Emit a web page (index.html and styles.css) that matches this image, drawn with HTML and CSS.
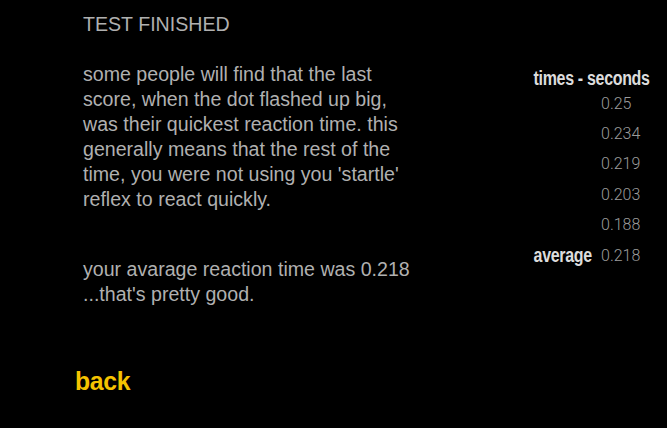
FILE: index.html
```html
<!DOCTYPE html>
<html>
<head>
<meta charset="utf-8">
<link rel="stylesheet" href="styles.css">
</head>
<body>
<div class="page">
  <div class="main">
    <div class="text">
      <h1 class="title">TEST FINISHED</h1>
      <p class="para">some people will find that the last<br>score, when the dot flashed up big,<br>was their quickest reaction time. this<br>generally means that the rest of the<br>time, you were not using you 'startle'<br>reflex to react quickly.</p>
      <p class="result">your avarage reaction time was 0.218<br>...that's pretty good.</p>
    </div>
    <div class="times">
      <div class="times-head"><span class="cond">times - seconds</span></div>
      <div class="row"><span class="label"></span><span class="val">0.25</span></div>
      <div class="row"><span class="label"></span><span class="val">0.234</span></div>
      <div class="row"><span class="label"></span><span class="val">0.219</span></div>
      <div class="row"><span class="label"></span><span class="val">0.203</span></div>
      <div class="row"><span class="label"></span><span class="val">0.188</span></div>
      <div class="row"><span class="label"><span class="cond cond-r">average</span></span><span class="val">0.218</span></div>
    </div>
  </div>
  <div class="back"><span class="back-text">back</span></div>
</div>
</body>
</html>
```

FILE: styles.css
```css
html, body {
  margin: 0;
  padding: 0;
  background: #000;
}
body {
  width: 667px;
  height: 428px;
  overflow: hidden;
  font-family: "Liberation Sans", Arial, sans-serif;
}
.page {
  display: flex;
  flex-direction: column;
  padding-top: 12px;
}
.main {
  display: flex;
}
.text {
  padding-left: 83px;
  width: 420px;
  color: #b0b0b0;
  font-size: 19.6px;
  line-height: 25px;
}
.title {
  margin: 0;
  font-size: 19.6px;
  font-weight: normal;
  line-height: 25px;
}
.para {
  margin: 25px 0 0;
}
.result {
  margin: 45px 0 0;
}
.times {
  margin-top: 56px;
  margin-left: 31px;
  display: flex;
  flex-direction: column;
  width: 133px;
}
.times-head {
  display: flex;
  justify-content: center;
  color: #dcdcdc;
  line-height: 20px;
  height: 20px;
  width: 116px;
  white-space: nowrap;
}
.cond {
  display: inline-block;
  flex: none;
  font-family: "Liberation Sans", Arial, sans-serif;
  font-weight: bold;
  font-size: 20px;
  letter-spacing: -0.4px;
  white-space: nowrap;
  transform: scaleX(0.8);
  transform-origin: center;
}
.cond-r {
  transform-origin: right center;
}
.row {
  display: grid;
  grid-template-columns: 58px auto;
  column-gap: 9px;
  height: 30.4px;
  align-items: center;
}
.label {
  display: flex;
  justify-content: flex-end;
  color: #dcdcdc;
  white-space: nowrap;
  line-height: 20px;
}
.val {
  font-family: Roboto, "Liberation Sans", sans-serif;
  color: #9c9c9c;
  font-size: 16px;
  font-weight: 300;
}
.back {
  margin-top: 59px;
  margin-left: 75px;
  line-height: 30px;
}
.back-text {
  display: inline-block;
  font-family: "Liberation Sans", Arial, sans-serif;
  font-weight: bold;
  color: #f5c300;
  font-size: 25px;
  letter-spacing: -0.3px;
  transform: scaleX(0.99);
  transform-origin: left center;
}
```
